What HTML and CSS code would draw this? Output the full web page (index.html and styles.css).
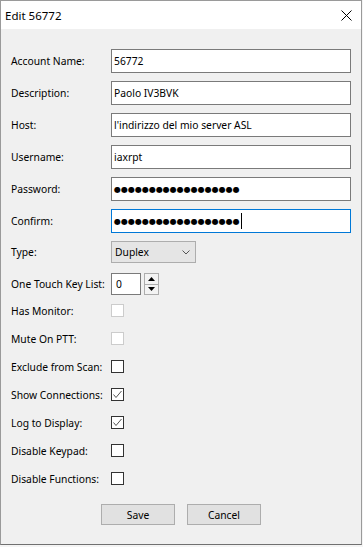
FILE: index.html
```html
<!DOCTYPE html>
<html lang="en">
<head>
    <meta charset="UTF-8">
    <meta name="viewport" content="width=device-width, initial-scale=1.0">
    <title>Edit 56772</title>
    <link rel="stylesheet" href="styles.css">
</head>
<body>
    <div class="window">
        <div class="titlebar">
            <span class="title">Edit 56772</span>
            <svg class="close" width="11" height="11" viewBox="0 0 11 11">
                <path d="M0.5 0.5 L10.5 10.5 M10.5 0.5 L0.5 10.5" stroke="#000" stroke-width="1" fill="none"/>
            </svg>
        </div>

        <div class="content">
            <div class="form">
                <div class="row row-text">
                    <label>Account Name:</label>
                    <div class="textbox">56772</div>
                </div>
                <div class="row row-text">
                    <label>Description:</label>
                    <div class="textbox">Paolo IV3BVK</div>
                </div>
                <div class="row row-text">
                    <label>Host:</label>
                    <div class="textbox">l'indirizzo del mio server ASL</div>
                </div>
                <div class="row row-text">
                    <label>Username:</label>
                    <div class="textbox">iaxrpt</div>
                </div>
                <div class="row row-text">
                    <label>Password:</label>
                    <div class="textbox"><span class="dots">●●●●●●●●●●●●●●●●●●</span></div>
                </div>
                <div class="row row-text">
                    <label>Confirm:</label>
                    <div class="textbox focused"><span class="dots">●●●●●●●●●●●●●●●●●●</span><span class="caret"></span></div>
                </div>
                <div class="row row-combo">
                    <label>Type:</label>
                    <div class="combo">
                        <span>Duplex</span>
                        <svg width="8" height="5" viewBox="0 0 8 5">
                            <polyline points="0.5,0.5 4,4 7.5,0.5" stroke="#555" stroke-width="1" fill="none"/>
                        </svg>
                    </div>
                </div>
                <div class="row row-num">
                    <label>One Touch Key List:</label>
                    <div class="numbox">0</div>
                    <div class="spin">
                        <div class="spin-btn">
                            <svg width="7" height="4" viewBox="0 0 7 4"><polygon points="3.5,0 7,4 0,4" fill="#000"/></svg>
                        </div>
                        <div class="spin-btn">
                            <svg width="7" height="4" viewBox="0 0 7 4"><polygon points="0,0 7,0 3.5,4" fill="#000"/></svg>
                        </div>
                    </div>
                </div>
                <div class="row row-check">
                    <label>Has Monitor:</label>
                    <div class="checkbox disabled"></div>
                </div>
                <div class="row row-check">
                    <label>Mute On PTT:</label>
                    <div class="checkbox disabled"></div>
                </div>
                <div class="row row-check">
                    <label>Exclude from Scan:</label>
                    <div class="checkbox"></div>
                </div>
                <div class="row row-check">
                    <label>Show Connections:</label>
                    <div class="checkbox">
                        <svg width="11" height="11" viewBox="0 0 11 11"><polyline points="1.5,5.5 4,8.5 9.5,2" stroke="#555" stroke-width="1" fill="none"/></svg>
                    </div>
                </div>
                <div class="row row-check">
                    <label>Log to Display:</label>
                    <div class="checkbox">
                        <svg width="11" height="11" viewBox="0 0 11 11"><polyline points="1.5,5.5 4,8.5 9.5,2" stroke="#555" stroke-width="1" fill="none"/></svg>
                    </div>
                </div>
                <div class="row row-check">
                    <label>Disable Keypad:</label>
                    <div class="checkbox"></div>
                </div>
                <div class="row row-check">
                    <label>Disable Functions:</label>
                    <div class="checkbox"></div>
                </div>
            </div>

            <div class="buttons">
                <button>Save</button>
                <button>Cancel</button>
            </div>
        </div>
    </div>
</body>
</html>
```

FILE: styles.css
```css
body {
    margin: 0;
    background-color: #f4f4f4;
    font-family: "Noto Sans", "Open Sans", sans-serif;
    font-size: 10.3px;
    color: #000;
}
.window {
    width: 362px;
    height: 545px;
    box-sizing: border-box;
    border: 1px solid #9a9a9a;
    border-bottom-color: #707070;
    background-color: #f0f0f0;
    display: flex;
    flex-direction: column;
}
.titlebar {
    height: 28px;
    background: white;
    display: flex;
    align-items: center;
    justify-content: space-between;
    padding: 0 9px 0 4px;
}
.title {
    font-size: 11.5px;
}
.content {
    padding: 20px 10px 0 10px;
}
.form {
    display: flex;
    flex-direction: column;
}
.row {
    display: flex;
    align-items: center;
}
.row label {
    width: 100px;
    flex-shrink: 0;
    white-space: nowrap;
}
.row-text { height: 24px; margin-bottom: 8px; }
.row-combo { height: 22px; margin-bottom: 10px; }
.row-num { height: 22px; margin-bottom: 9px; }
.row-check { height: 13px; margin-bottom: 15px; }
.textbox {
    width: 241px;
    height: 24px;
    box-sizing: border-box;
    border: 1px solid #7a7a7a;
    background: white;
    padding-left: 2px;
    display: flex;
    align-items: center;
    white-space: nowrap;
}
.textbox.focused {
    border-color: #0078d7;
}
.dots {
    font-family: "DejaVu Sans", sans-serif;
    font-size: 8px;
    letter-spacing: 0;
}
.caret {
    width: 1px;
    height: 16px;
    background: #000;
    margin-left: 1px;
}
.combo {
    width: 85px;
    height: 22px;
    box-sizing: border-box;
    border: 1px solid #adadad;
    background: #e5e5e5;
    display: flex;
    align-items: center;
    justify-content: space-between;
    padding: 0 5px 0 3px;
}
.numbox {
    width: 30px;
    height: 22px;
    box-sizing: border-box;
    border: 1px solid #7a7a7a;
    background: white;
    padding-left: 4px;
    display: flex;
    align-items: center;
}
.spin {
    width: 15px;
    height: 22px;
    margin-left: 3px;
    box-sizing: border-box;
    border: 1px solid #adadad;
    display: flex;
    flex-direction: column;
}
.spin-btn {
    flex: 1;
    background: #f3f3f3;
    display: flex;
    align-items: center;
    justify-content: center;
}
.spin-btn + .spin-btn {
    border-top: 1px solid #adadad;
}
.checkbox {
    width: 13px;
    height: 13px;
    box-sizing: border-box;
    border: 1px solid #333;
    background: white;
    display: flex;
    align-items: center;
    justify-content: center;
}
.checkbox.disabled {
    border-color: #cccccc;
}
.buttons {
    display: flex;
    justify-content: center;
    gap: 12px;
    margin-top: 4px;
}
button {
    width: 74px;
    height: 21px;
    border: 1px solid #adadad;
    background: #e1e1e1;
    font-family: "Noto Sans", "Open Sans", sans-serif;
    font-size: 10.3px;
    color: #000;
    padding: 0;
}
```
